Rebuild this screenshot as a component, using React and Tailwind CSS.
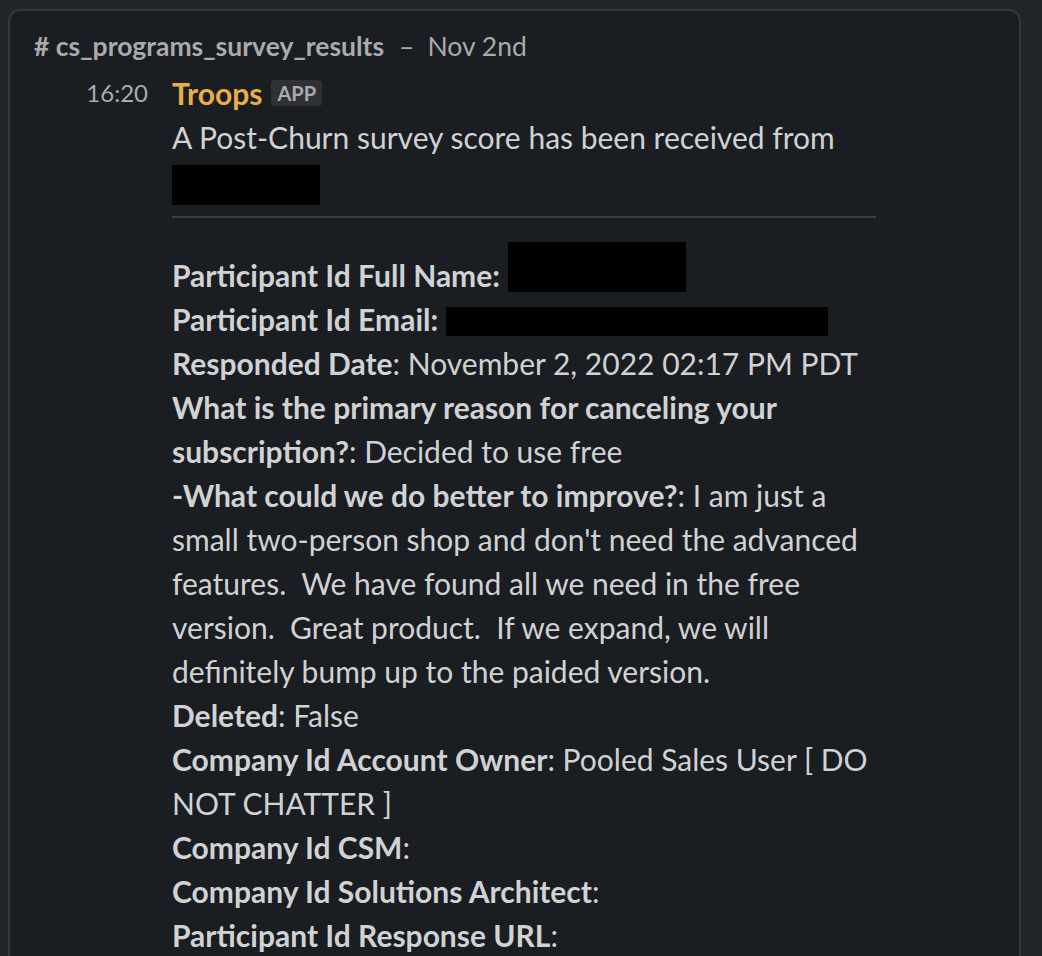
import React from 'react';

const Label = ({ children }) => <span className="font-bold">{children}</span>;

const Redacted = ({ className }) => (
  <span className={`inline-block bg-black align-top ${className}`} />
);

export default function App() {
  return (
    <div className="min-h-screen w-[1042px] h-[956px] overflow-hidden bg-[#222529] pt-[9px] pl-[8px] pr-[21px]" style={{ fontFamily: 'Lato, "Noto Sans", sans-serif' }}>
      <div className="h-[980px] rounded-[12px] border-2 border-[#35373b] bg-[#1a1d21]">
        {/* channel header */}
        <div className="flex items-center pl-[24px] pt-[18px] h-[52px] text-[26.5px] leading-[32px] text-[#ababad]">
          <span className="font-bold"># cs_programs_survey_results</span>
          <span className="ml-[15px]">–</span>
          <span className="ml-[13px]">Nov 2nd</span>
        </div>

        {/* message */}
        <div className="flex pt-[8px]">
          <div className="w-[162px] shrink-0 pr-[24px] text-right text-[24px] leading-[44px] text-[#ababad]">16:20</div>
          <div className="text-[30px] leading-[44px] text-[#d1d2d3] whitespace-nowrap">
            <div className="flex items-center gap-[9px]">
              <span className="font-bold text-[#e8ae48]">Troops</span>
              <span className="rounded-[4px] bg-[#2f3135] px-[6px] text-[20px] leading-[26px] font-bold text-[#ababad]">APP</span>
            </div>
            <div>A Post-Churn survey score has been received from</div>
            <div className="h-[44px] flex items-start pt-[6px]">
              <span className="block w-[148px] h-[40px] bg-black" />
            </div>
            <div className="mt-[13px] mb-[35px] h-[2px] w-[704px] bg-[#3a3c40]" />

            <div className="whitespace-pre">
              <div>
                <Label>Participant Id Full Name:</Label> <Redacted className="w-[178px] h-[50px] -mt-[11px]" />
              </div>
              <div>
                <Label>Participant Id Email:</Label> <Redacted className="w-[382px] h-[29px] mt-[10px]" />
              </div>
              <div>
                <Label>Responded Date</Label>: November 2, 2022 02:17 PM PDT
              </div>
              <div>
                <Label>What is the primary reason for canceling your</Label>
              </div>
              <div>
                <Label>subscription?</Label>: Decided to use free
              </div>
              <div>
                <Label>-What could we do better to improve?</Label>: I am just a
              </div>
              <div>small two-person shop and don't need the advanced</div>
              <div>{'features.  We have found all we need in the free'}</div>
              <div>{'version.  Great product.  If we expand, we will'}</div>
              <div>definitely bump up to the paided version.</div>
              <div>
                <Label>Deleted</Label>: False
              </div>
              <div>
                <Label>Company Id Account Owner</Label>: Pooled Sales User [ DO
              </div>
              <div>NOT CHATTER ]</div>
              <div>
                <Label>Company Id CSM</Label>:
              </div>
              <div>
                <Label>Company Id Solutions Architect</Label>:
              </div>
              <div>
                <Label>Participant Id Response URL</Label>:
              </div>
            </div>
          </div>
        </div>
      </div>
    </div>
  );
}
